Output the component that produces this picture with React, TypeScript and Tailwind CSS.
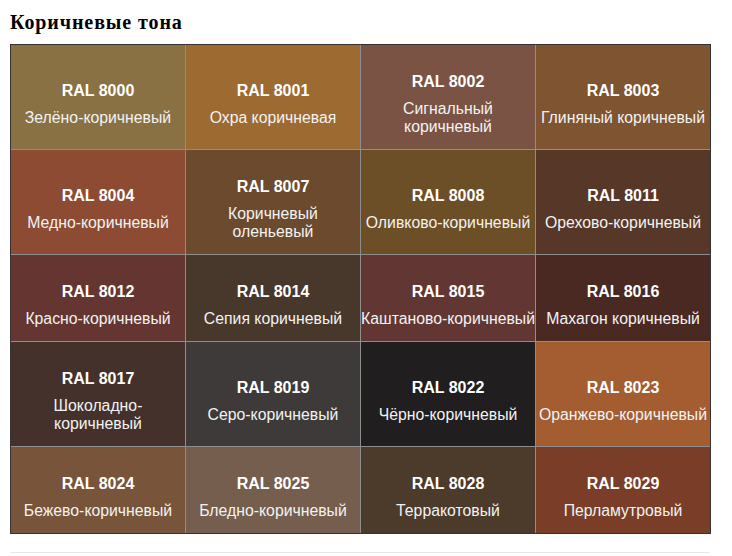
const colors = [
  { code: "RAL 8000", lines: ["Зелёно-коричневый"], bg: "bg-[#897143]" },
  { code: "RAL 8001", lines: ["Охра коричневая"], bg: "bg-[#9d6a31]" },
  { code: "RAL 8002", lines: ["Сигнальный", "коричневый"], bg: "bg-[#7a5345]" },
  { code: "RAL 8003", lines: ["Глиняный коричневый"], bg: "bg-[#7f5430]" },
  { code: "RAL 8004", lines: ["Медно-коричневый"], bg: "bg-[#8d4b34]" },
  { code: "RAL 8007", lines: ["Коричневый", "оленьевый"], bg: "bg-[#6c4a2e]" },
  { code: "RAL 8008", lines: ["Оливково-коричневый"], bg: "bg-[#6d4f27]" },
  { code: "RAL 8011", lines: ["Орехово-коричневый"], bg: "bg-[#573728]" },
  { code: "RAL 8012", lines: ["Красно-коричневый"], bg: "bg-[#653631]" },
  { code: "RAL 8014", lines: ["Сепия коричневый"], bg: "bg-[#48382b]" },
  { code: "RAL 8015", lines: ["Каштаново-коричневый"], bg: "bg-[#623733]" },
  { code: "RAL 8016", lines: ["Махагон коричневый"], bg: "bg-[#4a2922]" },
  { code: "RAL 8017", lines: ["Шоколадно-", "коричневый"], bg: "bg-[#45312b]" },
  { code: "RAL 8019", lines: ["Серо-коричневый"], bg: "bg-[#3e3a3a]" },
  { code: "RAL 8022", lines: ["Чёрно-коричневый"], bg: "bg-[#201e1f]" },
  { code: "RAL 8023", lines: ["Оранжево-коричневый"], bg: "bg-[#a45d31]" },
  { code: "RAL 8024", lines: ["Бежево-коричневый"], bg: "bg-[#78553a]" },
  { code: "RAL 8025", lines: ["Бледно-коричневый"], bg: "bg-[#765e4e]" },
  { code: "RAL 8028", lines: ["Терракотовый"], bg: "bg-[#4c3a2a]" },
  { code: "RAL 8029", lines: ["Перламутровый"], bg: "bg-[#793d28]" },
];

export default function App() {
  return (
    <div className="w-[732px] h-[556px] bg-white px-[10px] pt-[11px]">
      <h2 className="font-['Liberation_Serif','Times_New_Roman',serif] font-bold text-[20px] leading-[22px] tracking-[0.9px] text-black">
        Коричневые тона
      </h2>
      <div className="mt-[11px] w-[701px] border border-[#333333]">
        <div className="grid grid-cols-4 gap-px bg-[#8e8e8e]">
          {colors.map((c) => (
            <div
              key={c.code}
              className={`${c.bg} flex flex-col justify-center items-center text-center whitespace-nowrap pt-[27px] pb-[13px] text-white font-['Liberation_Sans',Arial,sans-serif]`}
            >
              <div className="font-bold text-[16px] leading-[19px] mb-[9px]">{c.code}</div>
              {c.lines.map((l) => (
                <div key={l} className="text-[15.8px] leading-[18px] text-[#f2f2f2]">
                  {l}
                </div>
              ))}
            </div>
          ))}
        </div>
      </div>
      <div className="mt-[18px] w-[700px] h-px bg-[#e8e8e8]" />
    </div>
  );
}
